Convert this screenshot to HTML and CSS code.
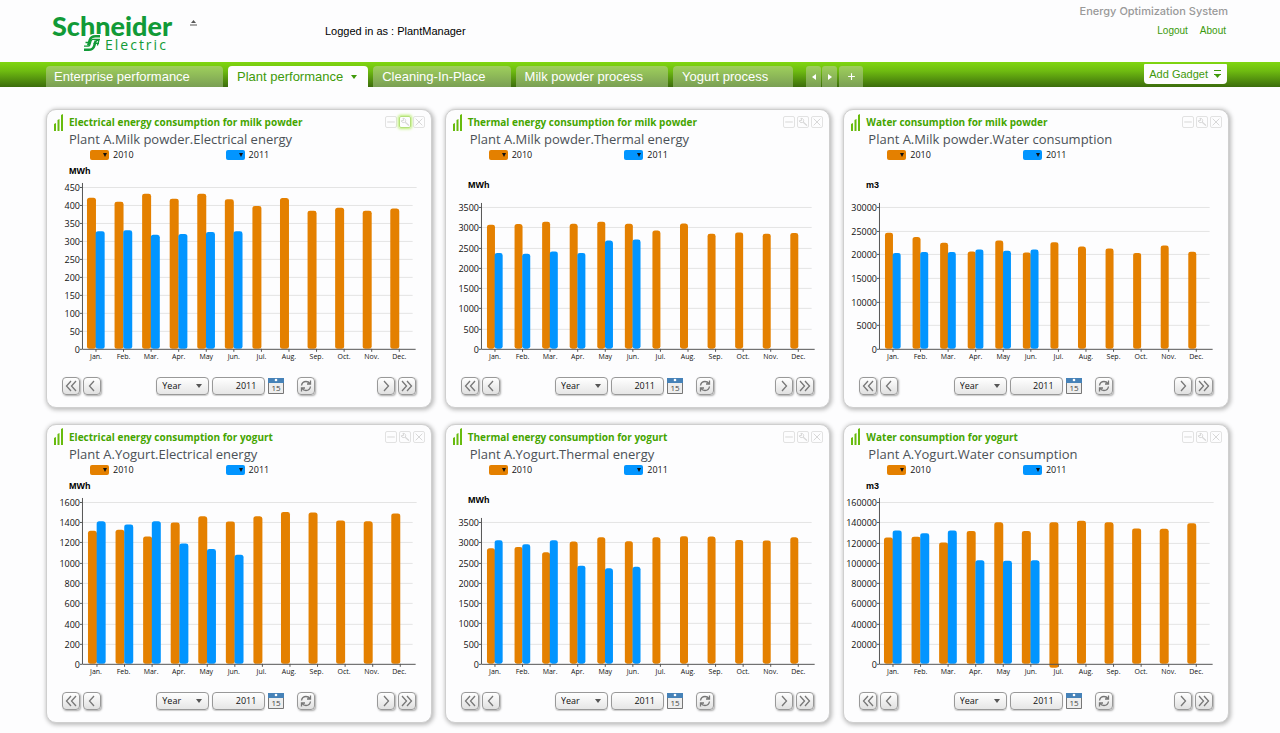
FILE: index.html
```html
<!DOCTYPE html>
<html lang="en">
<head>
<meta charset="utf-8">
<title>Energy Optimization System</title>
<link rel="stylesheet" href="styles.css">
</head>
<body>
<header class="masthead">
  <div class="brand">
    <div class="logo" role="img" aria-label="Schneider Electric">
      <span class="logo-name">Schneider</span>
      <span class="logo-row">
        <svg class="logo-mark" viewBox="0 0 18 18" aria-hidden="true">
          <path class="mark-back" d="M11 0h8l-1.500 7-2 6C14 17 10 19 6 19H-1l1-5 2-4 1-4C4 2 7 0 11 0Z"/>
          <path class="mark-ring" d="M17 2.200h-4.500C9 2.200 7.500 3.500 6.800 6L5.200 11.500M1 15.800h4.500c3.500 0 5-1.300 5.700-3.800l1.600-5.500"/>
          <path d="M2.500 8.500h5.500M1 12.200h4c1 0 1.500-.3 1.800-1.200l1.200-4c.3-1 1-1.600 2-1.600H17M10.500 9.300H16M12.800 6.500l3.200-.5-1.600 5.500"/>
        </svg>
        <span class="logo-sub">Electric</span>
      </span>
    </div>
    <button class="collapse" aria-label="Collapse header">
      <svg viewBox="0 0 7 7"><path d="M3.500 0 6 3H1Z"/><path d="M0 4.500h7v1H0Z"/></svg>
    </button>
  </div>
  <p class="session">Logged in as : PlantManager</p>
  <div class="system">
    <span class="system-name">Energy Optimization System</span>
    <nav class="links"><a href="#logout">Logout</a><a href="#about">About</a></nav>
  </div>
</header>
<nav class="tabbar" aria-label="Dashboards">
  <div class="tabs">
    <button class="tab tab-wide">Enterprise performance</button>
    <button class="tab tab-active" aria-current="page">Plant performance<span class="caret"></span></button>
    <button class="tab tab-roomy">Cleaning-In-Place</button>
    <button class="tab tab-roomy">Milk powder process</button>
    <button class="tab tab-roomy">Yogurt process</button>
  </div>
  <div class="tab-tools">
    <button class="tab-tool" aria-label="Previous tabs"><svg viewBox="0 0 6 8"><path d="M5 1v6L1 4Z"/></svg></button>
    <button class="tab-tool" aria-label="Next tabs"><svg viewBox="0 0 6 8"><path d="M1 1v6l4-3Z"/></svg></button>
    <button class="tab-tool tab-add" aria-label="Add tab"><svg viewBox="0 0 8 8"><path d="M3.500 1h1v2.500H7v1H4.500V7h-1V4.500H1v-1h2.500Z"/></svg></button>
  </div>
  <button class="add-gadget">Add Gadget
    <svg viewBox="0 0 8 8" aria-hidden="true"><path d="M0 0h7v1H0ZM0 4h7v1H0Z"/><path d="M1 5h5L3.500 8Z"/></svg>
  </button>
</nav>
<main class="gadgets" id="gadgets"></main>
<script src="gadgets.js"></script>
</body>
</html>
```
FILE: styles.css
```css
* { box-sizing: border-box; }

body {
  margin: 0;
  background: #fdfdfe;
  color: #111;
  font-family: "Liberation Sans", Arial, sans-serif;
}

button, input, select { font-family: inherit; margin: 0; padding: 0; border: 0; }
button { background: none; color: inherit; }
svg { display: block; }

/* Masthead */
.masthead {
  display: flex;
  justify-content: space-between;
  height: 62px;
  padding: 0 52px;
}
.brand { display: flex; gap: 18px; width: 273px; padding-top: 14px; }
.logo { color: #119a37; }
.logo-name { display: block; font: 900 27px/24px Lato, sans-serif; }
.logo-row { display: flex; align-items: flex-start; padding-left: 31px; gap: 4px; }
.logo-mark { width: 18px; height: 18px; margin-top: -4px; fill: none; stroke: #119a37; stroke-width: 1.3; }
.mark-back { fill: #fdfdfe; stroke: none; }
.mark-ring { stroke-width: 2.6; }
.logo-sub { font: 400 14px/14px "Open Sans", sans-serif; letter-spacing: 2px; }
.collapse { align-self: flex-start; padding-top: 6px; }
.collapse svg { width: 7px; height: 7px; fill: #555; }
.session { flex: 1; margin: 0; padding-top: 24px; font-size: 11px; line-height: 14px; color: #000; }
.system { display: flex; flex-direction: column; align-items: flex-end; gap: 6px; padding-top: 4px; }
.system-name { font: 500 11px/14px Inter, sans-serif; color: #999; }
.links { display: flex; gap: 12px; padding-right: 2px; font-size: 10px; line-height: 14px; }
.links a { color: #3a9a0b; text-decoration: none; }

/* Tab bar */
.tabbar {
  display: flex;
  height: 25px;
  padding: 0 53px 0 46px;
  background: linear-gradient(#80d610, #6fbc11 35%, #3c6d0c);
}
.tabs { display: flex; gap: 5px; padding-top: 4px; }
.tab {
  height: 21px;
  padding: 0 8px;
  border-radius: 4px 4px 0 0;
  background: linear-gradient(#9fd05c, #7a9f54);
  color: #fff;
  font-size: 13px;
  line-height: 21px;
  text-align: left;
}
.tab-wide { width: 177px; }
.tab-roomy { padding: 0 25px 0 9px; }
.tab-active {
  display: flex;
  align-items: center;
  gap: 8px;
  padding: 0 11px 0 9px;
  background: #fdfdfe;
  color: #3f9a0a;
}
.caret { border: 3px solid transparent; border-top: 4px solid #3f9a0a; border-bottom: 0; }
.tab-tools { display: flex; gap: 1px; flex: 1; padding: 4px 0 0 13px; }
.tab-tool {
  display: flex;
  align-items: center;
  justify-content: center;
  width: 15px;
  height: 21px;
  border-radius: 3px 3px 0 0;
  background: linear-gradient(#9fd05c, #7a9f54);
}
.tab-tool svg { width: 6px; height: 8px; fill: #fff; }
.tab-add { width: 24px; margin-left: 1px; }
.tab-add svg { width: 9px; height: 9px; }
.add-gadget {
  display: flex;
  align-items: center;
  gap: 6px;
  height: 20px;
  margin-top: 2px;
  padding: 0 5px;
  border-radius: 1px 1px 4px 4px;
  background: #fdfdfe;
  color: #3f9a0a;
  font-size: 11px;
}
.add-gadget svg { width: 8px; height: 8px; fill: #3f9a0a; }

/* Gadget grid */
.gadgets {
  display: grid;
  grid-template-columns: repeat(3, 1fr);
  gap: 16px 13px;
  padding: 22px 51px 11px 46px;
  font-family: "Open Sans", "Noto Sans", sans-serif;
}
.gadget {
  padding: 3px 6px 12px 7px;
  border: 1px solid #cfcfcf;
  border-radius: 10px;
  background: #fdfdfe;
  box-shadow: 1px 1px 4px 1px #bbb;
}
.gadget-head { display: flex; align-items: center; gap: 6px; height: 18px; }
.gadget-icon { width: 9px; height: 17px; fill: #68bb0e; }
.gadget-title { flex: 1; margin: 0; font-size: 10px; line-height: 16px; color: #45a500; }
.tools { display: flex; gap: 2px; }
.tool { width: 12px; height: 12px; border: 1px solid #e2e2e2; border-radius: 2px; }
.tool svg { width: 10px; height: 10px; fill: none; stroke: #d0d0d0; }
.tool-on { border-color: #b5e07c; box-shadow: 0 0 3px 1px #b9ee6e; }
.gadget-sub { margin: 0; padding-left: 15px; font-size: 13px; line-height: 17px; color: #4b5157; white-space: nowrap; }
.shifted .gadget-sub { padding-left: 17px; }
.legend { display: flex; gap: 92px; padding-left: 36px; height: 14px; align-items: center; }
.legend-item { display: flex; align-items: center; gap: 4px; font-size: 9px; line-height: 12px; color: #111; }
.swatch { display: flex; justify-content: flex-end; align-items: center; width: 19px; height: 10px; padding-right: 2px; border-radius: 2px; }
.swatch::after { content: ""; border: 2px solid transparent; border-top: 4px solid #111; border-bottom: 0; }
.swatch-a { background: #e48000; }
.swatch-b { background: #0295ff; }

/* Chart */
.chart { width: 100%; overflow: visible; }
.grid-line { stroke: #e4e4e4; }
.axis { stroke: #555; fill: none; }
.bar-a { fill: #e48000; }
.bar-b { fill: #0295ff; }
.tick-label { font-size: 9px; text-anchor: end; fill: #111; }
.month { font-size: 7px; text-anchor: middle; fill: #111; }
.unit { font: bold 9px "Liberation Sans", Arial, sans-serif; fill: #000; }

/* Period controls */
.controls { display: flex; justify-content: space-between; align-items: center; padding: 8px 9px 0 8px; }
.group { display: flex; align-items: center; gap: 3px; }
.group-period { margin-right: 6px; }
.btn {
  display: flex;
  align-items: center;
  justify-content: center;
  width: 18px;
  height: 18px;
  border: 1px solid #999;
  border-radius: 4px;
  background: linear-gradient(#fff, #e0e0e0);
  box-shadow: 1px 1px 2px #aaa;
}
.btn svg { width: 12px; height: 12px; fill: none; stroke: #777; stroke-width: 1.3; }
.refresh { margin-left: 10px; }
.picker { position: relative; display: flex; }
.picker::after {
  content: "";
  position: absolute;
  right: 7px;
  top: 7px;
  border: 3px solid transparent;
  border-top: 4px solid #555;
  border-bottom: 0;
  pointer-events: none;
}
.field {
  appearance: none;
  width: 53px;
  height: 18px;
  padding: 0 5px;
  border: 1px solid #999;
  border-radius: 4px;
  background: linear-gradient(#fff, #e6e6e6);
  box-shadow: 0 1px 1px #ccc;
  font-size: 9px;
  line-height: 16px;
  color: #111;
}
.field-year { padding-right: 8px; text-align: right; }
.calendar { width: 16px; height: 16px; }
.calendar svg { width: 16px; height: 16px; }
.calendar text { font-size: 8px; text-anchor: middle; fill: #444; }
```
FILE: gadgets.js
```js
const MONTHS = ["Jan.", "Feb.", "Mar.", "Apr.", "May", "Jun.", "Jul.", "Aug.", "Sep.", "Oct.", "Nov.", "Dec."];

const GADGETS = [
  { title: "Electrical energy consumption for milk powder", sub: "Plant A.Milk powder.Electrical energy",
    unit: "MWh", max: 450, step: 50, top: 25, x: 41, w: 9, active: true,
    a: [420, 409, 431, 417, 431, 416, 397, 419, 384, 392, 384, 390],
    b: [327, 330, 317, 319, 325, 327] },
  { title: "Thermal energy consumption for milk powder", sub: "Plant A.Milk powder.Thermal energy",
    unit: "MWh", max: 3500, step: 500, top: 45, x: 42, w: 8, shifted: true,
    a: [3060, 3077, 3135, 3085, 3135, 3085, 2921, 3093, 2840, 2872, 2840, 2856],
    b: [2362, 2345, 2403, 2362, 2674, 2699] },
  { title: "Water consumption for milk powder", sub: "Plant A.Milk powder.Water consumption",
    unit: "m3", max: 30000, step: 5000, top: 45, x: 42, w: 8, shifted: true,
    a: [24550, 23620, 22430, 20600, 22930, 20390, 22560, 21650, 21230, 20240, 21870, 20540],
    b: [20240, 20460, 20460, 21020, 20750, 21020] },
  { title: "Electrical energy consumption for yogurt", sub: "Plant A.Yogurt.Electrical energy",
    unit: "MWh", max: 1600, step: 200, top: 25, x: 42, w: 9,
    a: [1315, 1325, 1259, 1397, 1459, 1407, 1459, 1502, 1495, 1417, 1410, 1485],
    b: [1410, 1377, 1410, 1190, 1134, 1079] },
  { title: "Thermal energy consumption for yogurt", sub: "Plant A.Yogurt.Thermal energy",
    unit: "MWh", max: 3500, step: 500, top: 45, x: 42, w: 8, shifted: true,
    a: [2852, 2885, 2754, 3016, 3123, 3025, 3123, 3148, 3139, 3057, 3041, 3123],
    b: [3049, 2951, 3049, 2418, 2361, 2393] },
  { title: "Water consumption for yogurt", sub: "Plant A.Yogurt.Water consumption",
    unit: "m3", max: 160000, step: 20000, top: 25, x: 41, w: 9, shifted: true, overhang: 4,
    a: [125000, 125600, 120000, 131200, 140000, 131200, 140000, 141400, 140000, 133800, 133500, 139000],
    b: [131900, 129200, 131900, 102400, 101800, 102400] }
];

const BASE = 187;   /* y of the zero line */
const PITCH = 27.6; /* distance between months */

function chart(g) {
  /* The drawing starts 8 units in from the gadget's outer edge. */
  const ax = 28;
  const scale = (BASE - g.top) / g.max;
  let s = `<text class="unit" x="15" y="${g.top === 45 ? 26 : 12}">${g.unit}</text>`;
  for (let v = 0; v <= g.max; v += g.step) {
    const y = BASE - v * scale;
    const end = v === g.max && g.top === 25 ? 363 : 359;
    if (v) s += `<path class="grid-line" d="M${ax} ${Math.round(y) + .5}H${end}"/>`;
    s += `<path class="axis" d="M${ax - 2} ${Math.round(y) + .5}h2"/>`;
    s += `<text class="tick-label" x="${ax - 2}" y="${Math.round(y) + 4}">${v}</text>`;
  }
  MONTHS.forEach((m, i) => {
    const x = g.x - 8 + i * PITCH;
    const bar = (v, bx, cls, extra) =>
      `<rect class="${cls}" x="${bx}" y="${BASE - v * scale}" width="${g.w}" height="${v * scale + extra}" rx="2.5"/>`;
    s += `<path class="axis" d="M${x + g.w} ${BASE}v3"/>`;
    s += bar(g.a[i], x, "bar-a", i === 6 && g.overhang || 0);
    if (g.b[i] !== undefined) s += bar(g.b[i], x + g.w - .3, "bar-b", 0);
    s += `<text class="month" x="${42 + i * PITCH}" y="197">${m}</text>`;
  });
  s += `<path class="axis" d="M${ax + .5} ${g.top - 4}V${BASE + .5}H362"/>`;
  return `<svg class="chart" viewBox="0 0 371 207" role="img" aria-label="${g.title}">${s}</svg>`;
}

const icon = d => `<svg viewBox="0 0 12 12" aria-hidden="true"><path d="${d}"/></svg>`;
const button = (label, d, cls = "btn") => `<button class="${cls}" aria-label="${label}">${icon(d)}</button>`;

function gadget(g, n) {
  return `<section class="gadget${g.shifted ? " shifted" : ""}">
  <div class="gadget-head">
    <svg class="gadget-icon" viewBox="0 0 9 17" aria-hidden="true"><path d="M0 10 2 9v8H0ZM3.500 6l2-1v12h-2ZM7 1l2-1v17H7Z"/></svg>
    <h2 class="gadget-title">${g.title}</h2>
    <div class="tools">
      ${button("Minimize", "M1.500 6h9", "tool")}
      ${button("Settings", "M6 6.500l4.500 4M6.500 6l4.500 4M3.500 1.500 4.500 4 1.500 4.500C2 7 5 7.500 6.500 5.800 7.500 4 6.500 1.500 3.500 1.500Z", "tool" + (g.active ? " tool-on" : ""))}
      ${button("Close", "M2 2l8 8M10 2l-8 8", "tool")}
    </div>
  </div>
  <p class="gadget-sub">${g.sub}</p>
  <div class="legend">
    <span class="legend-item"><button class="swatch swatch-a" aria-label="Options for 2010"></button>2010</span>
    <span class="legend-item"><button class="swatch swatch-b" aria-label="Options for 2011"></button>2011</span>
  </div>
  ${chart(g)}
  <div class="controls">
    <div class="group">
      ${button("First period", "M6 1 1.500 6 6 11M11 1 6.500 6 11 11")}
      ${button("Previous period", "M8 1 3.500 6 8 11")}
    </div>
    <div class="group group-period">
      <span class="picker"><select class="field" aria-label="Period"><option>Year</option></select></span>
      <input class="field field-year" id="year-${n}" aria-label="Year" value="2011">
      <button class="calendar" aria-label="Pick a date"><svg viewBox="0 0 16 16"><path fill="#eee" stroke="#777" d="M.5.5h15v15H.5Z"/><path fill="#4682b8" d="M0 0h16v5H0Z"/><circle cx="8" cy="2" r="1.300" fill="#fff"/><text x="8" y="13">15</text></svg></button>
      ${button("Refresh", "M1.500 5.500C2 2.500 4 1.500 6 1.500c1.800 0 3 .7 4 2.200M10.500.5v3.500H7M10.500 6.500c-.5 3-2.500 4-4.500 4-1.800 0-3-.7-4-2.200M1.500 11.500V8H5", "btn refresh")}
    </div>
    <div class="group">
      ${button("Next period", "M4 1l4.500 5L4 11")}
      ${button("Last period", "M1 1l4.500 5L1 11M6 1l4.500 5L6 11")}
    </div>
  </div>
</section>`;
}

document.getElementById("gadgets").innerHTML = GADGETS.map(gadget).join("");
```
